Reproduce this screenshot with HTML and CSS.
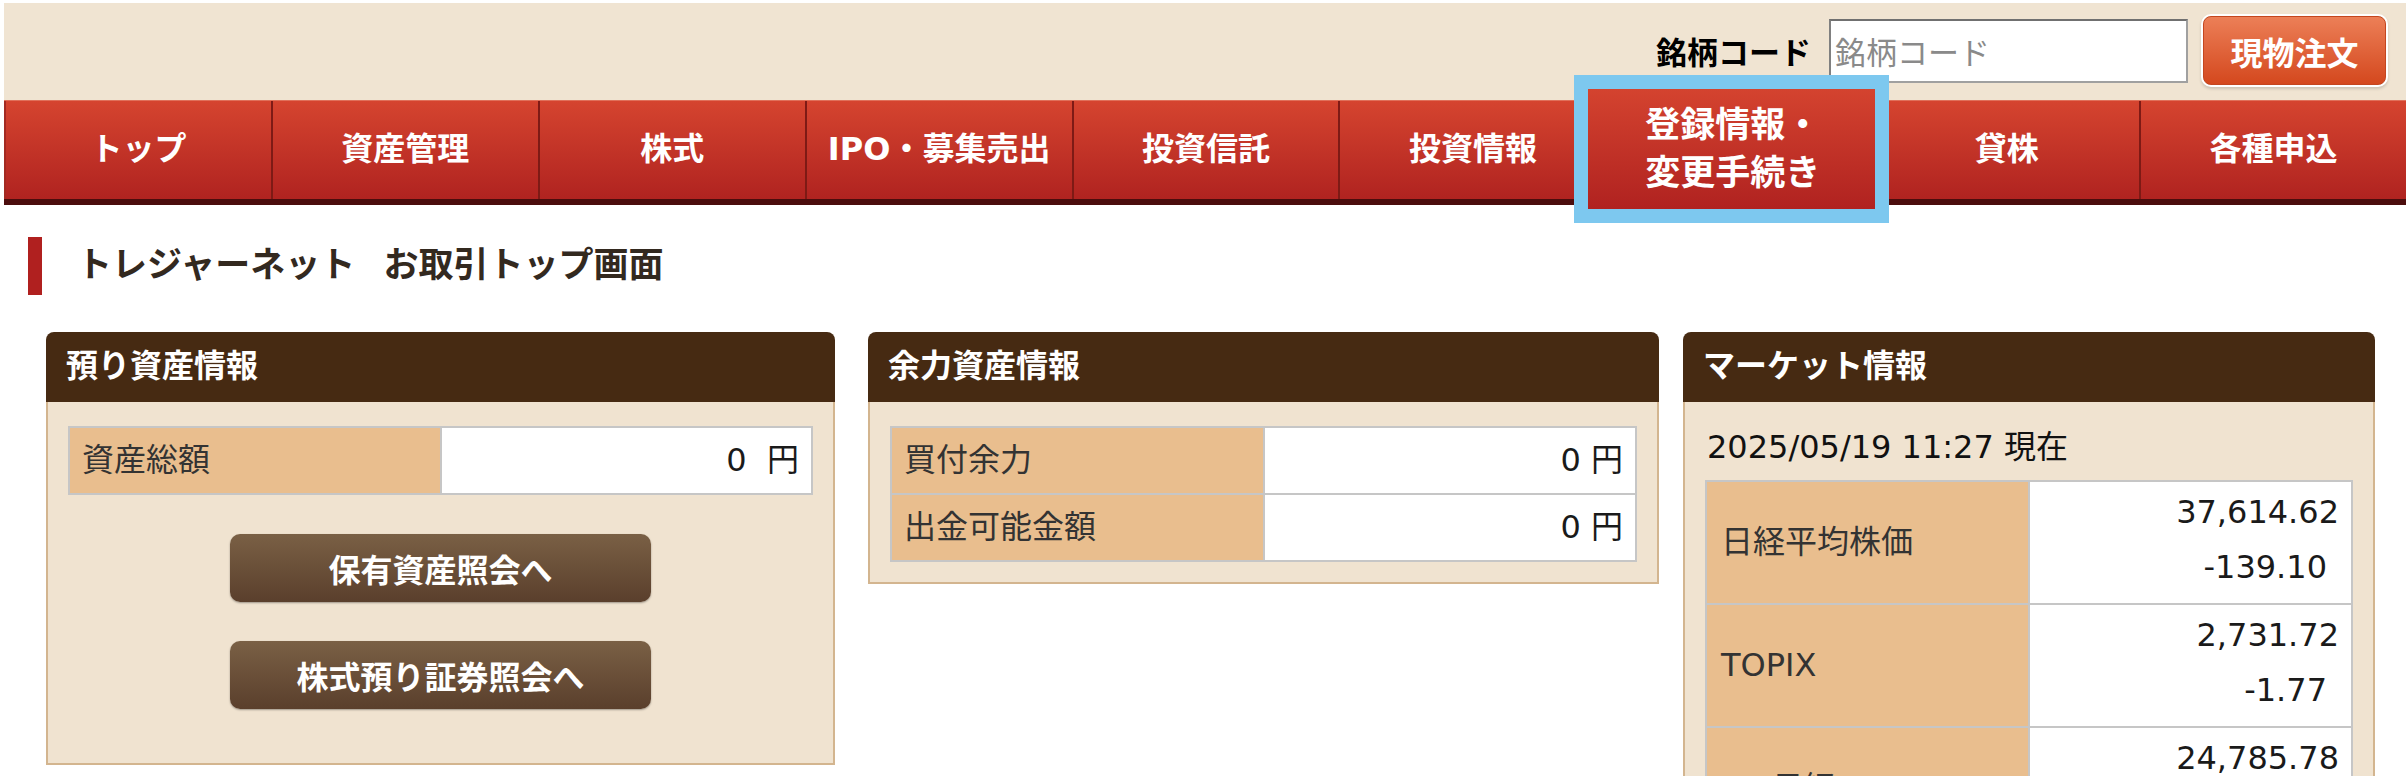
FILE: index.html
```html
<!DOCTYPE html>
<html lang="ja">
<head>
    <meta charset="UTF-8">
    <meta name="viewport" content="width=device-width, initial-scale=1.0">
    <title>トレジャーネット お取引トップ画面</title>
    <link rel="stylesheet" href="styles.css">
</head>
<body>

    <div class="topbar">
        <label class="code-label" for="code">銘柄コード</label>
        <input type="text" id="code" class="code-input" placeholder="銘柄コード">
        <button class="order-btn">現物注文</button>
    </div>

    <nav class="gnav">
        <a class="gnav-item">トップ</a>
        <a class="gnav-item">資産管理</a>
        <a class="gnav-item">株式</a>
        <a class="gnav-item">IPO・募集売出</a>
        <a class="gnav-item">投資信託</a>
        <a class="gnav-item">投資情報</a>
        <a class="gnav-item gnav-focus">
            <span class="gnav-callout">登録情報・<br>変更手続き</span>
        </a>
        <a class="gnav-item">貸株</a>
        <a class="gnav-item">各種申込</a>
    </nav>

    <h1 class="page-title">トレジャーネット お取引トップ画面</h1>

    <div class="panels">

        <section class="panel panel-assets">
            <h2 class="panel-head">預り資産情報</h2>
            <div class="panel-body">
                <table class="info-table">
                    <tr>
                        <th>資産総額</th>
                        <td>0&nbsp;&nbsp;円</td>
                    </tr>
                </table>
                <div class="btn-stack">
                    <button class="brown-btn">保有資産照会へ</button>
                    <button class="brown-btn">株式預り証券照会へ</button>
                </div>
            </div>
        </section>

        <section class="panel panel-power">
            <h2 class="panel-head">余力資産情報</h2>
            <div class="panel-body">
                <table class="info-table">
                    <tr>
                        <th>買付余力</th>
                        <td>0 円</td>
                    </tr>
                    <tr>
                        <th>出金可能金額</th>
                        <td>0 円</td>
                    </tr>
                </table>
            </div>
        </section>

        <section class="panel panel-market">
            <h2 class="panel-head">マーケット情報</h2>
            <div class="panel-body">
                <p class="market-time">2025/05/19 11:27 現在</p>
                <table class="info-table market-table">
                    <tr>
                        <th>日経平均株価</th>
                        <td>37,614.62<br><span class="chg">-139.10</span></td>
                    </tr>
                    <tr>
                        <th>TOPIX</th>
                        <td>2,731.72<br><span class="chg">-1.77</span></td>
                    </tr>
                    <tr>
                        <th>JPX日経400</th>
                        <td>24,785.78<br><span class="chg">-11.85</span></td>
                    </tr>
                </table>
            </div>
        </section>

    </div>

</body>
</html>
```

FILE: styles.css
```css
body {
    font-family: "DejaVu Sans", "Noto Sans CJK JP", sans-serif;
    margin: 3px 0 0 4px;
    background: #fff;
    color: #222;
    overflow: hidden;
}

/* top bar */

.topbar {
    height: 97px;
    background-color: #f0e4d2;
    margin-left: -4px;
    display: flex;
    justify-content: flex-end;
    align-items: center;
    padding-right: 20px;
    padding-bottom: 2px;
    box-sizing: border-box;
}

.code-label {
    font-family: "Noto Sans CJK JP", sans-serif;
    font-weight: bold;
    font-size: 31px;
    color: #000;
    margin-right: 18px;
}

.code-input {
    width: 359px;
    height: 64px;
    box-sizing: border-box;
    border: 2px solid #a0a0a0;
    border-top-color: #707070;
    border-left-color: #808080;
    padding: 0 4px;
    font-family: "Noto Sans CJK JP", sans-serif;
    font-size: 31px;
    margin-right: 15px;
}

.code-input::placeholder {
    color: #8a8a8a;
}

.order-btn {
    width: 183px;
    height: 69px;
    border: 1px solid #c4461f;
    border-radius: 8px;
    background: linear-gradient(#ec7f57, #d4481e);
    box-shadow: 0 0 0 2px #fff, 0 2px 3px 2px rgba(0, 0, 0, 0.15);
    color: #fff;
    font-family: "Noto Sans CJK JP", sans-serif;
    font-weight: bold;
    font-size: 32px;
    cursor: pointer;
}

/* global nav */

.gnav {
    display: flex;
    background: linear-gradient(#d5442f, #b02320);
    border-top: 1px solid #e0705a;
    border-bottom: 6px solid #4b0d0d;
}

.gnav-item {
    flex: 1;
    height: 98px;
    display: flex;
    align-items: center;
    justify-content: center;
    padding-bottom: 8px;
    box-sizing: border-box;
    color: #fff;
    font-weight: bold;
    font-size: 32px;
    border-left: 2px solid #7e1a15;
    white-space: nowrap;
}

.gnav-item:first-child {
    border-left-color: #a32a22;
}

.gnav-focus {
    position: relative;
}

.gnav-callout {
    position: absolute;
    left: -33px;
    top: -26px;
    width: 315px;
    height: 148px;
    box-sizing: border-box;
    border: 14px solid #7dc8ef;
    background: linear-gradient(#d4432f, #b02220);
    display: flex;
    align-items: center;
    justify-content: center;
    text-align: center;
    font-size: 35px;
    line-height: 48px;
    padding-left: 2px;
    z-index: 2;
}

/* page title */

.page-title {
    margin: 32px 0 0 24px;
    height: 58px;
    line-height: 56px;
    border-left: 14px solid #b0201f;
    padding-left: 35px;
    font-family: "DejaVu Sans", "Noto Sans CJK JP", sans-serif;
    font-size: 35px;
    font-weight: bold;
    word-spacing: 16px;
    color: #33291f;
}

/* panels */

.panels {
    display: flex;
    align-items: flex-start;
    margin-top: 37px;
    padding-left: 42px;
}

.panel {
    box-sizing: border-box;
}

.panel-assets {
    width: 789px;
}

.panel-power {
    width: 791px;
    margin-left: 33px;
}

.panel-market {
    width: 692px;
    margin-left: 24px;
}

.panel-head {
    margin: 0;
    height: 70px;
    line-height: 68px;
    padding-left: 20px;
    background-color: #462a12;
    border-radius: 8px 8px 0 0;
    color: #fff;
    font-size: 32px;
    font-weight: bold;
}

.panel-body {
    background-color: #f0e3d0;
    border: 2px solid #d3b58f;
    border-top: none;
    padding: 24px 20px 20px;
}

.panel-assets .panel-body {
    padding-bottom: 54px;
}

.info-table {
    width: 100%;
    border-collapse: collapse;
    table-layout: fixed;
}

.info-table th,
.info-table td {
    border: 2px solid #c6c6c6;
    line-height: 65px;
    padding: 0 12px;
    font-size: 32px;
    font-weight: normal;
}

.info-table th {
    background-color: #e9be8e;
    text-align: left;
    color: #333;
}

.info-table td {
    background-color: #fff;
    text-align: right;
    color: #1a1a1a;
}

.btn-stack {
    display: flex;
    flex-direction: column;
    align-items: center;
    gap: 39px;
    margin-top: 39px;
}

.brown-btn {
    width: 421px;
    height: 68px;
    border: none;
    border-radius: 10px;
    background: linear-gradient(#7a6045, #5a3f2c);
    box-shadow: 0 1px 2px rgba(0, 0, 0, 0.35);
    color: #fff;
    font-family: "Noto Sans CJK JP", sans-serif;
    font-size: 32px;
    font-weight: bold;
    cursor: pointer;
}

.market-time {
    margin: 0 0 12px 2px;
    line-height: 42px;
    font-size: 32px;
    color: #111;
}

.market-table th,
.market-table td {
    line-height: 55px;
}

.market-table th {
    padding-left: 14px;
}

.market-table td {
    padding: 3px 12px 8px;
}

.chg {
    margin-right: 12px;
}
```
